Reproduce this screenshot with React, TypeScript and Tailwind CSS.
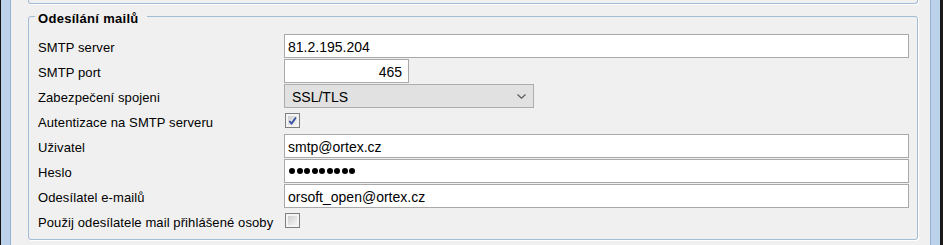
import React from "react";

const font = { fontFamily: '"Liberation Sans", Arial, sans-serif' };

const Row = ({ label, children }: { label: string; children: React.ReactNode }) => (
  <div className="flex h-[25px]">
    <div className="w-[246px] h-[24px] pt-[3px] flex items-center text-[13px] text-black tracking-[0.1px]">{label}</div>
    <div className="flex-1 h-[24px] flex items-center">{children}</div>
  </div>
);

const TextBox = ({ value, right, w }: { value: string; right?: boolean; w?: string }) => (
  <div
    className={`h-[24px] pt-[3px] bg-white border border-[#a9a9a9] flex items-center text-[14px] text-black ${
      right ? "justify-end pr-[6px]" : "pl-[3px]"
    } ${w ?? "w-full"}`}
  >
    {value}
  </div>
);

const Check = ({ checked }: { checked?: boolean }) => (
  <div className="ml-[1px] mt-[4px] w-[15px] h-[15px] border border-[#7f7f7f] bg-[#f4f4f4] p-[2px]">
    <div className="w-full h-full bg-gradient-to-br from-[#cfcfcf] to-[#f4f4f4] flex items-center justify-center">
      {checked && (
        <svg width="10" height="10" viewBox="0 0 10 10">
          <path d="M1.5 5.2 L4 7.8 L8.8 1" fill="none" stroke="#3550a3" strokeWidth="2" />
        </svg>
      )}
    </div>
  </div>
);

export default function App() {
  return (
    <div className="w-[943px] h-[245px] flex bg-[#f0f0f0] overflow-hidden" style={font}>
      <div className="w-[11px] h-full border-l border-l-[#111] bg-[#bcd2ea] border-r border-r-[#97b3d3]" />
      <div className="flex-1 pl-[17px] pr-[12px]">
        <div className="h-[4px] border-x border-b border-[#a3bcd6] rounded-b-[3px] shadow-[1px_1px_0_#fff]" />
        <div className="relative mt-[12px] h-[224px] border border-[#a3bcd6] rounded-[3px] shadow-[1px_1px_0_#fff] pl-[9px] pr-[8px] pt-[17px]">
          <span className="absolute left-[6px] top-[-6px] px-[3px] pr-[8px] bg-[#f0f0f0] text-[13px] font-bold leading-[15px] text-black tracking-[0.3px]">
            Odesílání mailů
          </span>
          <Row label="SMTP server">
            <TextBox value="81.2.195.204" />
          </Row>
          <Row label="SMTP port">
            <TextBox value="465" right w="w-[125px]" />
          </Row>
          <Row label="Zabezpečení spojeni">
            <div className="w-[250px] h-[24px] pt-[3px] bg-[#e1e1e1] border border-[#adadad] flex items-center justify-between pl-[7px] pr-[7px] text-[14px] text-black">
              <span>SSL/TLS</span>
              <svg width="9" height="5" viewBox="0 0 9 5" className="-mt-[2px]">
                <path d="M0.5 0.5 L4.5 4.2 L8.5 0.5" fill="none" stroke="#555" strokeWidth="1.1" />
              </svg>
            </div>
          </Row>
          <Row label="Autentizace na SMTP serveru">
            <div className="h-full">
              <Check checked />
            </div>
          </Row>
          <Row label="Uživatel">
            <TextBox value="smtp@ortex.cz" />
          </Row>
          <Row label="Heslo">
            <div className="w-full h-[24px] bg-white border border-[#a9a9a9] flex items-center pl-[4px] gap-[1.5px]">
              {Array.from({ length: 9 }).map((_, i) => (
                <div key={i} className="w-[6px] h-[6px] rounded-full bg-black" />
              ))}
            </div>
          </Row>
          <Row label="Odesílatel e-mailů">
            <TextBox value="orsoft_open@ortex.cz" />
          </Row>
          <Row label="Použij odesílatele mail přihlášené osoby">
            <div className="h-full">
              <Check />
            </div>
          </Row>
        </div>
      </div>
      <div className="w-[13px] h-full border-l border-l-[#97b3d3] bg-[#bcd2ea] border-r-[3px] border-r-[#1a1a1a]" />
    </div>
  );
}
